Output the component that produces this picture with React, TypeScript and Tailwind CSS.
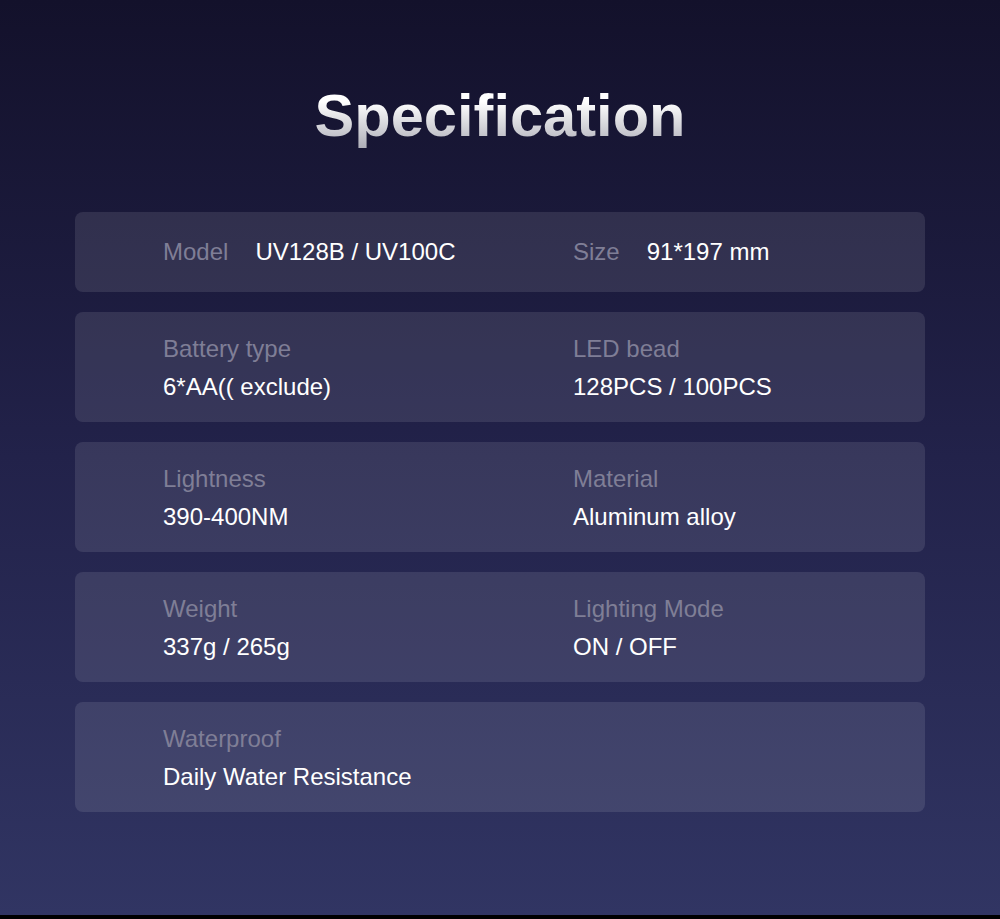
const specs = [
  [
    { label: "Battery type", value: "6*AA(( exclude)" },
    { label: "LED bead", value: "128PCS / 100PCS" },
  ],
  [
    { label: "Lightness", value: "390-400NM" },
    { label: "Material", value: "Aluminum alloy" },
  ],
  [
    { label: "Weight", value: "337g / 265g" },
    { label: "Lighting Mode", value: "ON / OFF" },
  ],
  [{ label: "Waterproof", value: "Daily Water Resistance" }],
];

export default function App() {
  return (
    <div className="h-[919px] w-[1000px] bg-black" style={{ fontFamily: '"Liberation Sans", Arial, sans-serif' }}>
      <div className="h-[915px] w-full bg-gradient-to-b from-[#13112b] via-[#22224a] to-[#313563] pt-[80px]">
        <h1 className="text-center text-[59.6px] font-bold leading-[72px] bg-gradient-to-b from-white from-30% to-[#a8a8b2] bg-clip-text text-transparent">
          Specification
        </h1>

        <div className="mx-[75px] mt-[60px] flex flex-col gap-5">
          {/* single row card */}
          <div className="grid h-[80px] grid-cols-[410px_1fr] items-center rounded-lg bg-white/10 pl-[88px] text-[24px]">
            <div className="flex gap-[27px]">
              <span className="text-[#7f7e96]">Model</span>
              <span className="text-white">UV128B / UV100C</span>
            </div>
            <div className="flex gap-[27px]">
              <span className="text-[#7f7e96]">Size</span>
              <span className="text-white">91*197 mm</span>
            </div>
          </div>

          {specs.map((row, i) => (
            <div
              key={i}
              className="grid h-[110px] grid-cols-[410px_1fr] rounded-lg bg-white/10 pl-[88px] pt-[18px] text-[24px]"
            >
              {row.map((s) => (
                <div key={s.label} className="flex flex-col">
                  <span className="leading-[38px] text-[#7f7e96]">{s.label}</span>
                  <span className="leading-[38px] text-white">{s.value}</span>
                </div>
              ))}
            </div>
          ))}
        </div>
      </div>
    </div>
  );
}
